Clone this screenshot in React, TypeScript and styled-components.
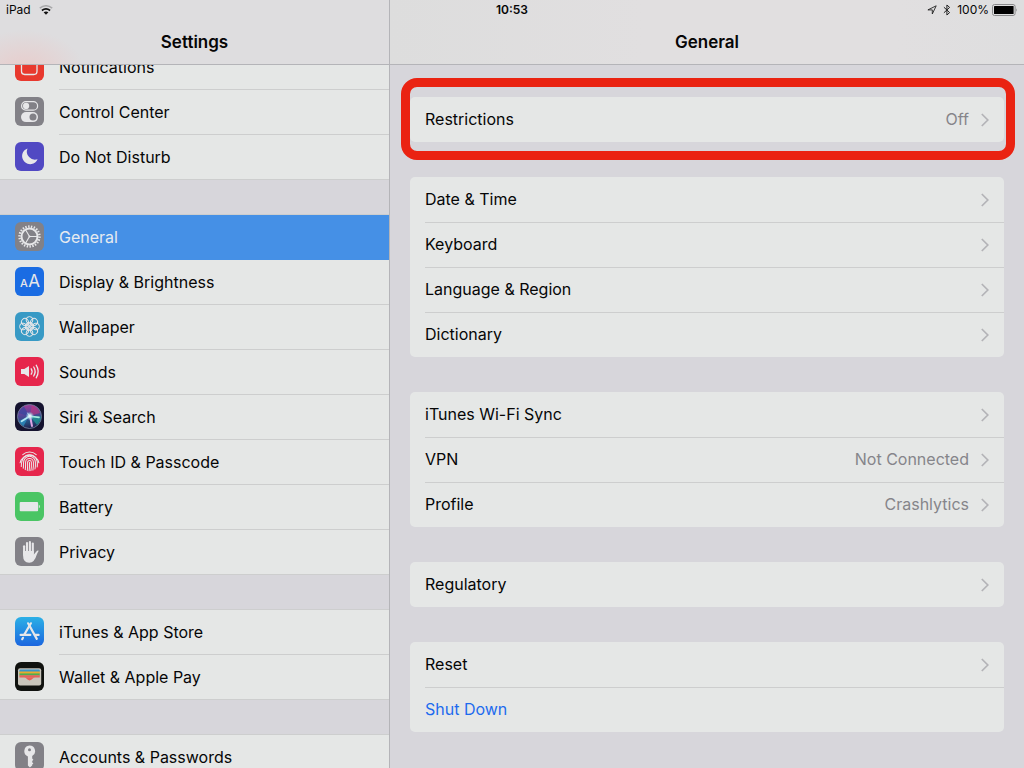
import React, { useLayoutEffect, useRef } from 'react';
import styled, { createGlobalStyle } from 'styled-components';

const color = {
  surface: '#e5e7e6',
  backdrop: '#d7d6db',
  line: '#cdcece',
  edge: '#b4b4b8',
  text: '#060606',
  muted: '#85858a',
  chevron: '#b3b3b7',
  selected: '#4590e6',
  action: '#1d6bee',
  mark: '#ea2312',
  glyph: '#e7e7e9',
};

const GlobalStyle = createGlobalStyle`
  *, *::before, *::after { box-sizing: border-box; }
  body {
    margin: 0;
    background: ${color.backdrop};
    color: ${color.text};
    font-family: Inter, "Liberation Sans", sans-serif;
    font-size: 16px;
    line-height: 20px;
  }
`;

const Shell = styled.div`
  display: grid;
  grid-template-columns: 390px minmax(0, 1fr);
  grid-template-rows: 20px minmax(0, 1fr);
  height: 100vh;
`;

const StatusBar = styled.header`
  grid-column: 1 / -1;
  grid-row: 1;
  z-index: 2;
  display: grid;
  grid-template-columns: 1fr auto 1fr;
  align-items: center;
  padding: 0 6px;
  font-size: 12px;
  line-height: 20px;
`;

const StatusGroup = styled.div<{ $end?: boolean }>`
  display: flex;
  align-items: center;
  gap: ${(p) => (p.$end ? 6 : 8)}px;
  justify-content: ${(p) => (p.$end ? 'flex-end' : 'flex-start')};
`;

const BatteryLevel = styled.span`
  display: flex;
  align-items: center;
  gap: 3px;
`;

const Clock = styled.time`
  font-weight: 600;
`;

const Pane = styled.section<{ $side?: boolean }>`
  grid-column: ${(p) => (p.$side ? 1 : 2)};
  grid-row: 1 / 3;
  display: flex;
  flex-direction: column;
  min-height: 0;
  border-right: ${(p) => (p.$side ? `1px solid ${color.edge}` : '0')};
`;

const TitleBar = styled.div<{ $tinted?: boolean }>`
  flex: none;
  height: 65px;
  padding-top: 32px;
  text-align: center;
  border-bottom: 1px solid ${color.edge};
  background: ${(p) =>
    p.$tinted
      ? 'radial-gradient(ellipse 60px 40px at 24px 70px, #e8cccb, transparent), #dedddf'
      : 'linear-gradient(90deg, #dddddd, #e1dfe0 40%, #e1dfe0 80%, #dededf)'};
`;

const Title = styled.h1`
  margin: 0;
  font-size: 17px;
  line-height: 20px;
  font-weight: 600;
`;

const Scroller = styled.div`
  flex: 1;
  min-height: 0;
  overflow-y: auto;
  scrollbar-width: none;
`;

const SideNav = styled.nav`
  display: flex;
  flex-direction: column;
  gap: 35px;
  padding-bottom: 35px;
`;

const SideGroup = styled.ul`
  margin: 0;
  padding: 0;
  list-style: none;
  background: ${color.surface};
  box-shadow: 0 -1px ${color.line}, inset 0 -1px ${color.line};
`;

const SideLink = styled.a<{ $selected?: boolean }>`
  display: flex;
  align-items: flex-start;
  gap: 15px;
  height: 45px;
  padding-left: 15px;
  text-decoration: none;
  color: ${(p) => (p.$selected ? '#e6ebf0' : 'inherit')};
  background: ${(p) => (p.$selected ? color.selected : 'transparent')};
`;

const AppIcon = styled.svg`
  flex: none;
  width: 29px;
  height: 29px;
  margin-top: 7px;
  border-radius: 6px;
`;

const SideLabel = styled.span<{ $line: boolean }>`
  flex: 1;
  height: 45px;
  line-height: 44px;
  border-bottom: ${(p) => (p.$line ? `1px solid ${color.line}` : '0')};
`;

const Cards = styled.main`
  display: flex;
  flex-direction: column;
  gap: 35px;
  padding: 32px 20px 35px;
`;

const Card = styled.div`
  position: relative;
  border-radius: 5px;
  background: ${color.surface};
`;

const Highlight = styled.div`
  position: absolute;
  inset: -19px -11px -18px -9px;
  border: 9px solid ${color.mark};
  border-radius: 16px;
  pointer-events: none;
`;

const CardRow = styled.button<{ $action?: boolean }>`
  display: flex;
  align-items: stretch;
  width: 100%;
  height: 45px;
  border: 0;
  padding: 0 0 0 15px;
  background: none;
  font: inherit;
  text-align: left;
  color: ${(p) => (p.$action ? color.action : 'inherit')};
`;

const CardRowBody = styled.span<{ $line: boolean }>`
  flex: 1;
  display: flex;
  align-items: center;
  gap: 12px;
  padding: 0 15px 1px 0;
  border-top: 1px solid ${(p) => (p.$line ? color.line : 'transparent')};
`;

const CardLabel = styled.span`
  flex: 1;
  padding-bottom: 1px;
`;

const CardValue = styled.span`
  padding-bottom: 1px;
  color: ${color.muted};
`;

const G = color.glyph;

const petals = [0, 45, 90, 135, 180, 225, 270, 315];

const icons: Record<string, { bg: string; art: React.ReactNode }> = {
  notifications: {
    bg: '#e8392e',
    art: (
      <>
        <rect x="6.5" y="7.5" width="15.5" height="15" rx="3.2" fill="none" stroke={G} strokeWidth="1.3" />
        <circle cx="21.5" cy="8" r="3.6" fill={G} />
      </>
    ),
  },
  control: {
    bg: '#828187',
    art: (
      <>
        <rect x="6.6" y="4.6" width="16" height="8.6" rx="4.3" fill="none" stroke={G} strokeWidth="1.2" />
        <circle cx="11.1" cy="8.9" r="3.1" fill={G} />
        <rect x="6" y="15.1" width="17" height="10" rx="5" fill={G} />
        <circle cx="18" cy="20.1" r="3.5" fill="#828187" />
      </>
    ),
  },
  dnd: {
    bg: '#5149c3',
    art: <path d="M12.5 6.4A8.1 8.1 0 1 0 22.6 17.3A8.2 8.2 0 0 1 12.5 6.4Z" fill={G} />,
  },
  general: {
    bg: '#828187',
    art: (
      <g fill="none" stroke={G}>
        <circle cx="14.5" cy="14.5" r="10" strokeWidth="2.4" pathLength="220" strokeDasharray="5 5" />
        <circle cx="14.5" cy="14.5" r="8" strokeWidth="2" />
        <path d="M14.5 14.5H22M14.5 14.5L10.7 8M14.5 14.5L10.7 21" strokeWidth="1.1" />
        <circle cx="14.5" cy="14.5" r="1" fill={G} stroke="none" />
      </g>
    ),
  },
  display: {
    bg: '#1a6ce3',
    art: (
      <g fill={G} fontFamily="Inter, sans-serif" textAnchor="middle">
        <text x="9" y="20" fontSize="11" fontWeight="500">A</text>
        <text x="19" y="20" fontSize="17">A</text>
      </g>
    ),
  },
  wallpaper: {
    bg: '#389ac5',
    art: (
      <g fill="none" stroke={G} strokeWidth="1">
        {petals.map((a) => (
          <circle key={a} cx="14.5" cy="8" r="3.4" transform={`rotate(${a} 14.5 14.5)`} />
        ))}
        {petals.map((a) => (
          <circle key={`i${a}`} cx="14.5" cy="12" r="1.9" strokeWidth="0.7" transform={`rotate(${a + 22} 14.5 14.5)`} />
        ))}
      </g>
    ),
  },
  sounds: {
    bg: '#e6264c',
    art: (
      <>
        <path d="M6 12H9.3L14 8.9V20.1L9.3 17H6Z" fill={G} />
        <g fill="none" stroke={G} strokeWidth="1.3" strokeLinecap="round">
          <path d="M16.2 11.8Q18 14.5 16.2 17.2" />
          <path d="M18.7 10Q21.6 14.5 18.7 19" />
          <path d="M21.2 8.2Q25.2 14.5 21.2 20.8" />
        </g>
      </>
    ),
  },
  siri: {
    bg: '#15132f',
    art: (
      <>
        <defs>
          <linearGradient id="siriOrb" x1="0.4" y1="0" x2="0.6" y2="1">
            <stop offset="0" stopColor="#a33b97" />
            <stop offset="0.4" stopColor="#55469a" />
            <stop offset="0.7" stopColor="#24507f" />
            <stop offset="1" stopColor="#231d4c" />
          </linearGradient>
          <radialGradient id="siriCore">
            <stop offset="0" stopColor="#ffffff" />
            <stop offset="0.4" stopColor="#c9eef6" stopOpacity="0.8" />
            <stop offset="1" stopColor="#6fc0e0" stopOpacity="0" />
          </radialGradient>
        </defs>
        <circle cx="14.5" cy="14.5" r="12" fill="url(#siriOrb)" stroke="#7488a0" strokeWidth="0.8" />
        <path d="M14.5 14.5L3.5 11Q5 6.5 9 4.5Z" fill="#34489f" opacity="0.7" />
        <path d="M14.5 14L17 3.2Q23 5.5 25 11Z" fill="#c4367f" opacity="0.6" />
        <path d="M15 14L26 14.5Q25.5 20 22 23Z" fill="#1f9a96" opacity="0.75" />
        <path d="M14 14L4 19Q5.5 22.5 8.5 24.2Z" fill="#2c95c8" opacity="0.7" />
        <g stroke="#d9f3f7" strokeLinecap="round">
          <path d="M14.5 14.2L6.6 19.2" strokeWidth="1.8" stroke="#b4e7f2" />
          <path d="M15 14.2L24 15.4" strokeWidth="1.6" stroke="#a6ece0" />
          <path d="M15 14L17 24" strokeWidth="2" stroke="#e0a6e4" />
          <path d="M14.5 14L12.6 11" strokeWidth="1" stroke="#c6c2f2" />
        </g>
        <circle cx="14.8" cy="14" r="4.4" fill="url(#siriCore)" />
      </>
    ),
  },
  touch: {
    bg: '#e6264c',
    art: (
      <g fill="none" stroke={G} strokeWidth="1.05" strokeLinecap="round">
        <path d="M7.8 7.6A10 10 0 0 1 21.2 7.6" />
        <path d="M5.1 15.8A9.6 9.6 0 0 1 23.9 15.8" />
        <path d="M6.3 19.4C6.3 17 6.4 16.8 6.8 14.7A7.8 7.8 0 0 1 22.3 14.8C22.5 17 22.5 18 22.2 20" />
        <path d="M8.3 21.3C8.6 19 8.4 17.5 8.6 15.2A5.9 5.9 0 0 1 20.4 15.2C20.6 18 20.4 20 20 22" />
        <path d="M10.3 22.6C10.7 20 10.5 17.5 10.6 15.3A3.9 3.9 0 0 1 18.4 15.3C18.6 18 18.3 21 17.9 23.1" />
        <path d="M12.3 23.4C12.8 20.5 12.5 17.5 12.6 15.4A1.9 1.9 0 0 1 16.4 15.4C16.5 18.4 16.4 21 15.9 23.6" />
        <path d="M14.5 15.4C14.6 18.5 14.5 21 14.1 23.8" />
      </g>
    ),
  },
  battery: {
    bg: '#4ac564',
    art: (
      <>
        <rect x="4.7" y="10" width="18.4" height="9.2" rx="1" fill={G} />
        <path d="M23.8 12.6Q26 14.6 23.8 16.6Z" fill={G} />
      </>
    ),
  },
  privacy: {
    bg: '#828187',
    art: (
      <>
        <g stroke={G} strokeWidth="2.1" strokeLinecap="round">
          <path d="M9.1 9.2V17" />
          <path d="M12 6V16" />
          <path d="M14.9 5V16" />
          <path d="M17.8 6.6V16" />
        </g>
        <path d="M8.05 14H18.85V17.6L21.6 14.2Q22.6 13.2 23.7 13.8Q22.5 15.6 21.7 17.8Q19.6 25.7 14.2 25.7Q8.05 25.7 8.05 18.6Z" fill={G} />
      </>
    ),
  },
  store: {
    bg: 'url(#storeSky)',
    art: (
      <>
        <defs>
          <linearGradient id="storeSky" x1="0" y1="0" x2="0" y2="1">
            <stop offset="0" stopColor="#2bb0e6" />
            <stop offset="1" stopColor="#1b66df" />
          </linearGradient>
        </defs>
        <g stroke={G} strokeWidth="2.2" strokeLinecap="round" fill="none">
          <path d="M15.9 6.3L9.5 17.2" />
          <path d="M13.1 6.3L21.8 21.9" />
          <path d="M5.6 17.9H15.3" />
          <path d="M19.8 17.9H23.6" />
          <path d="M8 20.8L7.2 22.2" />
        </g>
      </>
    ),
  },
  wallet: {
    bg: '#10120f',
    art: (
      <>
        <rect x="3" y="6.2" width="23.2" height="17.2" rx="2" fill="#c9c5bb" />
        <rect x="4.4" y="7.6" width="20.4" height="3" rx="1" fill="#3a96c9" />
        <rect x="4.4" y="9.5" width="20.4" height="2.4" fill="#eaa92b" />
        <rect x="4.4" y="11.4" width="20.4" height="2.2" fill="#4eae4f" />
        <path d="M4.4 13.3H24.8V15.4H4.4Z" fill="#e4635a" />
        <path d="M9.2 15.2Q10.6 15.4 11.4 16.6Q12.8 18.4 14.6 18.4T17.8 16.6Q18.6 15.4 20 15.2Z" fill="#e4635a" />
      </>
    ),
  },
  key: {
    bg: '#828187',
    art: (
      <path
        fillRule="evenodd"
        fill={G}
        d="M14.5 3.6A5.6 5.6 0 0 1 17.2 14.1V16.6L18.4 17.8L17.2 19V20.2L18.4 21.4L17.2 22.6V23.6L14.9 25.6L12.9 23.6V14.4A5.6 5.6 0 0 1 14.5 3.6ZM14.5 6.2A1.5 1.5 0 1 0 14.5 9.2A1.5 1.5 0 0 0 14.5 6.2Z"
      />
    ),
  },
};

const sideGroups = [
  [
    ['notifications', 'Notifications'],
    ['control', 'Control Center'],
    ['dnd', 'Do Not Disturb'],
  ],
  [
    ['general', 'General'],
    ['display', 'Display & Brightness'],
    ['wallpaper', 'Wallpaper'],
    ['sounds', 'Sounds'],
    ['siri', 'Siri & Search'],
    ['touch', 'Touch ID & Passcode'],
    ['battery', 'Battery'],
    ['privacy', 'Privacy'],
  ],
  [
    ['store', 'iTunes & App Store'],
    ['wallet', 'Wallet & Apple Pay'],
  ],
  [['key', 'Accounts & Passwords']],
];

type Item = { label: string; value?: string; action?: boolean };

const cardGroups: { items: Item[]; highlighted?: boolean }[] = [
  { items: [{ label: 'Restrictions', value: 'Off' }], highlighted: true },
  {
    items: [
      { label: 'Date & Time' },
      { label: 'Keyboard' },
      { label: 'Language & Region' },
      { label: 'Dictionary' },
    ],
  },
  {
    items: [
      { label: 'iTunes Wi-Fi Sync' },
      { label: 'VPN', value: 'Not Connected' },
      { label: 'Profile', value: 'Crashlytics' },
    ],
  },
  { items: [{ label: 'Regulatory' }] },
  { items: [{ label: 'Reset' }, { label: 'Shut Down', action: true }] },
];

const Chevron = () => (
  <svg width="8" height="14" viewBox="0 0 8 14" fill="none" stroke={color.chevron} strokeWidth="1.7" aria-hidden="true">
    <path d="M0.8 1L6.8 7L0.8 13" />
  </svg>
);

const WifiIcon = () => (
  <svg width="14" height="10" viewBox="0 0 14 10" fill="none" aria-label="Wi-Fi">
    <path d="M0.8 3.2Q7 -1.6 13.2 3.2" stroke="#a9a9ab" strokeWidth="1.6" />
    <path d="M2.9 5.5Q7 2.4 11.1 5.5" stroke="#111" strokeWidth="1.7" />
    <path d="M4.6 7.3Q7 5.7 9.4 7.3L7 9.8Z" fill="#111" />
  </svg>
);

const LocationIcon = () => (
  <svg width="10" height="10" viewBox="0 0 10 10" fill="none" stroke="#222" strokeWidth="0.9" aria-label="Location">
    <path d="M0.9 4.9L9.2 0.8L5.3 9V4.9Z" strokeLinejoin="round" />
  </svg>
);

const BluetoothIcon = () => (
  <svg width="8" height="12" viewBox="0 0 8 12" fill="none" stroke="#222" strokeWidth="1" aria-label="Bluetooth">
    <path d="M0.9 3.2L6.6 8.6L3.9 11V1L6.6 3.4L0.9 8.8" />
  </svg>
);

const ChargeIcon = () => (
  <svg width="26" height="12" viewBox="0 0 26 12" aria-label="Battery full">
    <rect x="0.5" y="0.5" width="22.6" height="11" rx="2" fill="none" stroke="#8a8a8c" />
    <rect x="2" y="2" width="19.6" height="8" rx="0.6" fill="#000" />
    <path d="M24.2 4.2Q25.8 6 24.2 7.8Z" fill="#8a8a8c" />
  </svg>
);

export default function App() {
  const sidebar = useRef<HTMLDivElement>(null);

  // The list opens slightly scrolled, with its first row under the title bar.
  useLayoutEffect(() => {
    if (sidebar.current) sidebar.current.scrollTop = 20;
  }, []);

  return (
    <>
      <GlobalStyle />
      <Shell>
        <StatusBar>
          <StatusGroup>
            <span>iPad</span>
            <WifiIcon />
          </StatusGroup>
          <Clock>10:53</Clock>
          <StatusGroup $end>
            <LocationIcon />
            <BluetoothIcon />
            <BatteryLevel>
              <span>100%</span>
              <ChargeIcon />
            </BatteryLevel>
          </StatusGroup>
        </StatusBar>

        <Pane $side>
          <TitleBar $tinted>
            <Title>Settings</Title>
          </TitleBar>
          <Scroller ref={sidebar}>
            <SideNav aria-label="Settings">
              {sideGroups.map((group, g) => (
                <SideGroup key={g}>
                  {group.map(([id, label], i) => {
                    const selected = id === 'general';
                    return (
                      <li key={id}>
                        <SideLink href={`#${id}`} $selected={selected} aria-current={selected ? 'page' : undefined}>
                          <AppIcon viewBox="0 0 29 29" aria-hidden="true">
                            <rect width="29" height="29" fill={icons[id].bg} />
                            {icons[id].art}
                          </AppIcon>
                          <SideLabel $line={!selected && i < group.length - 1}>{label}</SideLabel>
                        </SideLink>
                      </li>
                    );
                  })}
                </SideGroup>
              ))}
            </SideNav>
          </Scroller>
        </Pane>

        <Pane>
          <TitleBar>
            <Title as="h2">General</Title>
          </TitleBar>
          <Scroller>
            <Cards>
              {cardGroups.map((group, g) => (
                <Card key={g}>
                  {group.items.map((item, i) => (
                    <CardRow key={item.label} type="button" $action={item.action}>
                      <CardRowBody $line={i > 0}>
                        <CardLabel>{item.label}</CardLabel>
                        {item.value && <CardValue>{item.value}</CardValue>}
                        {!item.action && <Chevron />}
                      </CardRowBody>
                    </CardRow>
                  ))}
                  {group.highlighted && <Highlight />}
                </Card>
              ))}
            </Cards>
          </Scroller>
        </Pane>
      </Shell>
    </>
  );
}
